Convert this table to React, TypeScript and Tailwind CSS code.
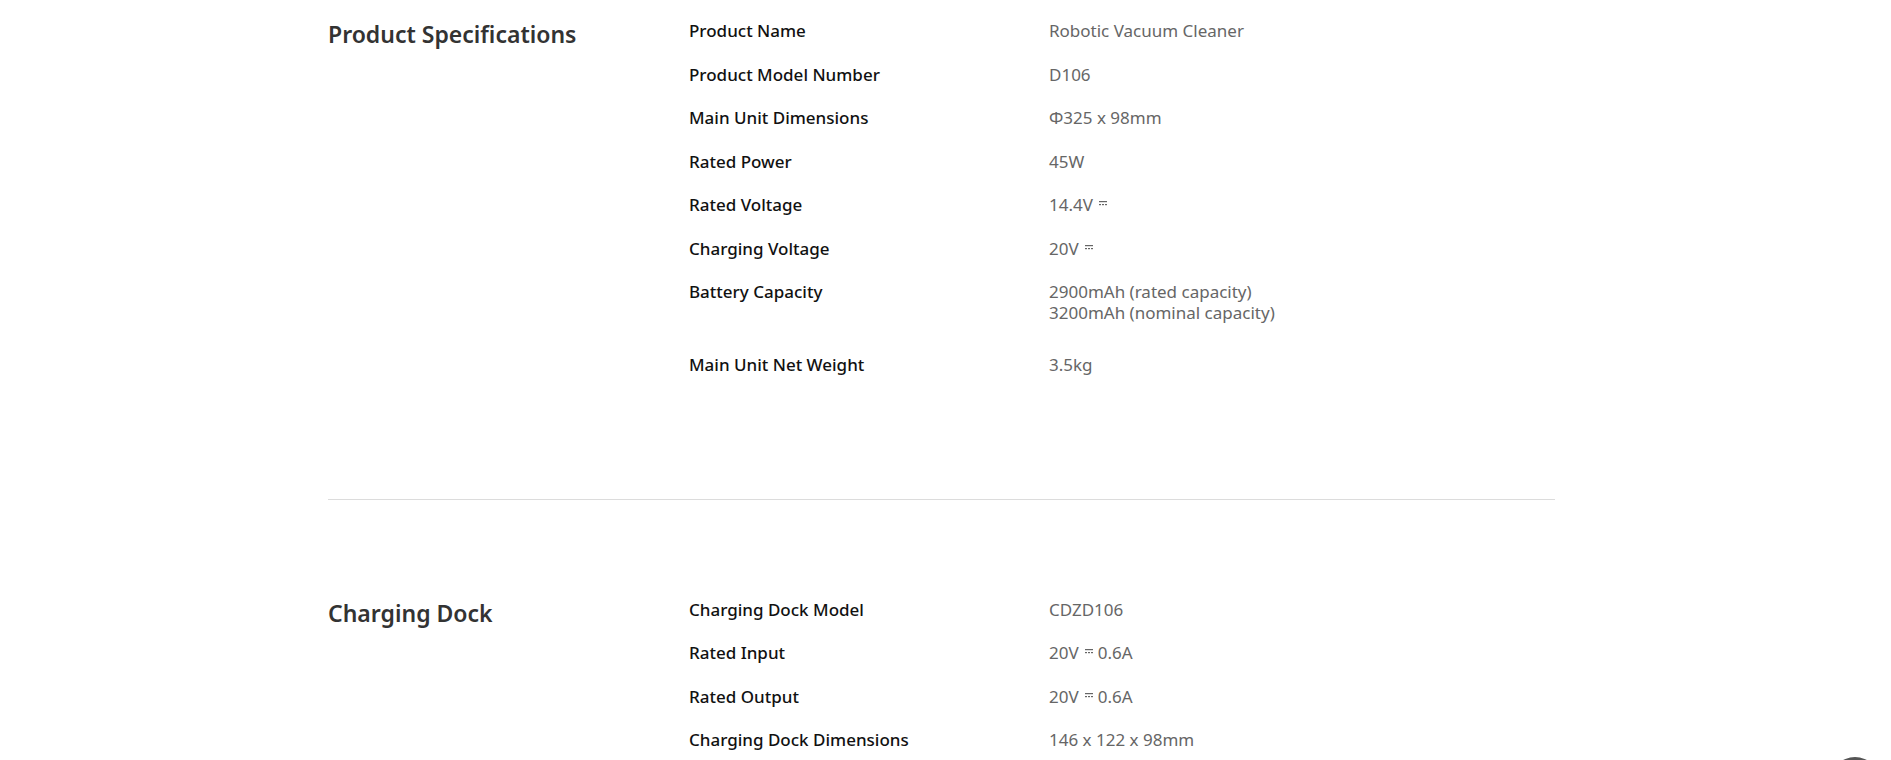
import React from "react";

const Dc = () => (
    <svg width="8" height="5" viewBox="0 0 8 5" className="inline-block align-middle ml-[6px] mr-[5px] mb-[5px]">
        <rect x="0" y="0" width="8" height="1.2" fill="#666"/>
        <rect x="0" y="3" width="2" height="1.2" fill="#666"/>
        <rect x="3" y="3" width="2" height="1.2" fill="#666"/>
        <rect x="6" y="3" width="2" height="1.2" fill="#666"/>
    </svg>
);

type Row = { label: string; value: React.ReactNode; tall?: boolean };

const specs: Row[] = [
    { label: "Product Name", value: "Robotic Vacuum Cleaner" },
    { label: "Product Model Number", value: "D106" },
    { label: "Main Unit Dimensions", value: "Φ325 x 98mm" },
    { label: "Rated Power", value: "45W" },
    { label: "Rated Voltage", value: <>14.4V<Dc/></> },
    { label: "Charging Voltage", value: <>20V<Dc/></> },
    {
        label: "Battery Capacity",
        value: <>2900mAh (rated capacity)<br/>3200mAh (nominal capacity)</>,
        tall: true,
    },
    { label: "Main Unit Net Weight", value: "3.5kg" },
];

const dock: Row[] = [
    { label: "Charging Dock Model", value: "CDZD106" },
    { label: "Rated Input", value: <>20V<Dc/>0.6A</> },
    { label: "Rated Output", value: <>20V<Dc/>0.6A</> },
    { label: "Charging Dock Dimensions", value: "146 x 122 x 98mm" },
];

const Section = ({ title, rows }: { title: string; rows: Row[] }) => (
    <section className="flex">
        <h2 className="w-[361px] shrink-0 text-[23px] leading-[30px] font-semibold text-[#333] -mt-[1px]">{title}</h2>
        <div className="flex-1">
            {rows.map((r) => (
                <div key={r.label} className={`flex leading-[21px] ${r.tall ? "mb-[31px]" : "mb-[22.5px]"}`}>
                    <div className="w-[360px] shrink-0 text-[17px] font-medium text-[#111]">{r.label}</div>
                    <div className="text-[17px] text-[#666]">{r.value}</div>
                </div>
            ))}
        </div>
    </section>
);

export default function App() {
    return (
        <div className="relative w-[1891px] h-[760px] overflow-hidden bg-white" style={{ fontFamily: '"Noto Sans", sans-serif' }}>
            <div className="ml-[328px] w-[1227px] pt-[20px]">
                <Section title="Product Specifications" rows={specs}/>
                <div className="h-px bg-[#dcdcdc] mt-[101px] mb-[99px]"/>
                <Section title="Charging Dock" rows={dock}/>
            </div>
            <div className="absolute left-[1830px] top-[757px] w-[50px] h-[50px] rounded-full bg-[#555]"/>
        </div>
    );
}
